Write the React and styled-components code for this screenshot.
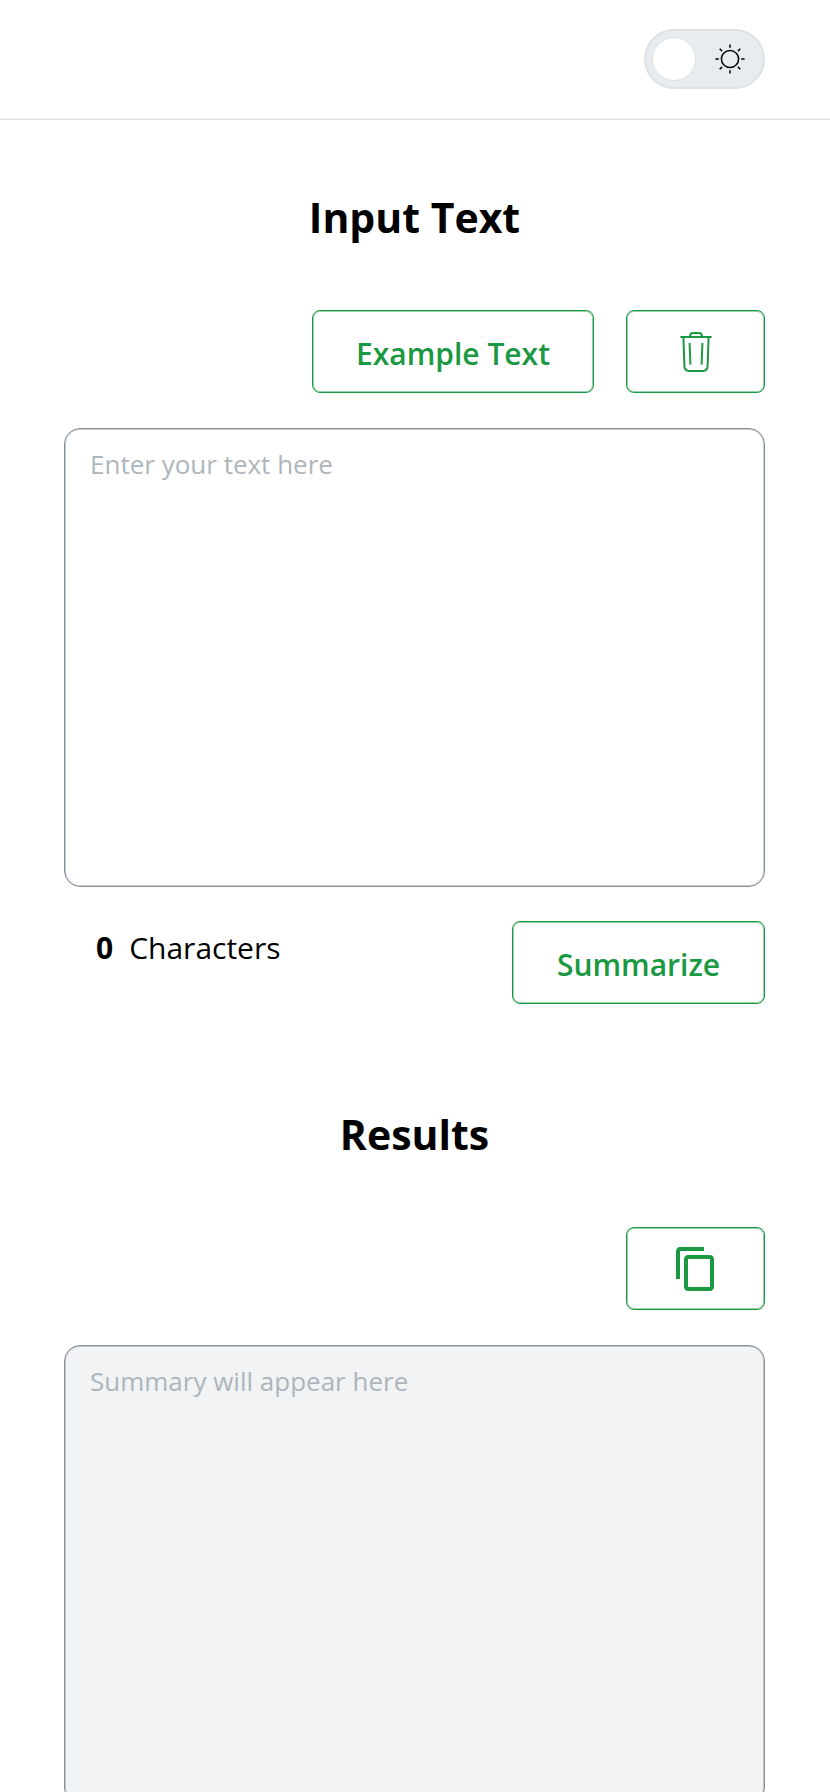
import React, { useState } from "react";
import styled, { createGlobalStyle } from "styled-components";
import { MdContentCopy } from "react-icons/md";

const GREEN = "#1a9842";
const EXAMPLE =
  "Text summarization is the process of shortening a document while keeping its most important ideas.";

const GlobalStyle = createGlobalStyle`
  *, *::before, *::after { box-sizing: border-box; }
  body {
    margin: 0;
    background: #fff;
    color: #000;
    font-family: "Segoe UI", "Open Sans", "Noto Sans", sans-serif;
  }
  button, textarea { font-family: inherit; }
`;

const Header = styled.header`
  display: flex;
  justify-content: flex-end;
  align-items: center;
  height: 120px;
  padding: 0 65px 1px 64px;
  border-bottom: 1px solid #dee2e6;
  box-shadow: inset 0 -1px rgba(222, 226, 230, 0.5);
`;

const Toggle = styled.label`
  position: relative;
  display: flex;
  flex-direction: ${(p) => (p.$dark ? "row-reverse" : "row")};
  align-items: center;
  justify-content: space-between;
  width: 121px;
  height: 60px;
  padding: 0 6px;
  border: 2px solid #dee2e6;
  border-radius: 30px;
  background: #e9ecef;
  cursor: pointer;
`;

const ToggleInput = styled.input`
  position: absolute;
  inset: 0;
  width: 100%;
  height: 100%;
  margin: 0;
  opacity: 0;
  cursor: pointer;
`;

const Knob = styled.span`
  width: 44px;
  height: 44px;
  border: 1px solid #dee2e6;
  border-radius: 50%;
  background: #fff;
`;

const SunSlot = styled.span`
  display: flex;
  padding: 0 11px;
`;

const Main = styled.main`
  padding: 0 65px 0 64px;
`;

const Panel = styled.section`
  display: flex;
  flex-direction: column;
  padding-top: 64px;
`;

const Title = styled.h2`
  margin: 0;
  font-size: 41px;
  line-height: 66px;
  font-weight: 700;
  text-align: center;
`;

const Actions = styled.div`
  display: flex;
  justify-content: flex-end;
  gap: 32px;
  padding: 60px 0 35px;
`;

const Button = styled.button`
  display: flex;
  align-items: center;
  justify-content: center;
  width: ${(p) => p.$width};
  height: 83px;
  padding: 4px 0 0;
  border: 1px solid ${GREEN};
  border-radius: 8px;
  box-shadow: inset 0 0 0 1px rgba(26, 152, 66, 0.45);
  background: transparent;
  color: ${GREEN};
  font-size: 30px;
  line-height: 40px;
  font-weight: 600;
  cursor: pointer;
`;

const IconButton = styled(Button)`
  padding: 0;
`;

const TextBox = styled.textarea`
  display: block;
  width: 100%;
  height: 459px;
  padding: 15px 25px;
  border: 1px solid #868e96;
  border-radius: 16px;
  box-shadow: inset 0 0 0 1px rgba(134, 142, 150, 0.45);
  outline: none;
  resize: none;
  background: ${(p) => (p.readOnly ? "#f1f3f5" : "#fff")};
  color: #000;
  font-size: 26px;
  line-height: 40px;

  &::placeholder {
    color: #adb5bd;
    opacity: 1;
  }
`;

const Footer = styled.div`
  display: flex;
  justify-content: space-between;
  align-items: flex-start;
  padding: 34px 0 33px;
`;

const Counter = styled.p`
  display: flex;
  gap: 16px;
  margin: 0;
  padding: 7px 32px;
  font-size: 30px;
  line-height: 40px;
`;

function SunIcon() {
  return (
    <svg width="32" height="32" viewBox="0 0 32 32" fill="none" stroke="#000" strokeWidth="1.5" aria-hidden="true">
      <circle cx="16" cy="16" r="8.6" />
      <path d="M16 1.4v3.4M16 27.2v3.4M1.4 16h3.4M27.2 16h3.4M5.7 5.7l2.4 2.4M23.9 23.9l2.4 2.4M5.7 26.3l2.4-2.4M23.9 8.1l2.4-2.4" />
    </svg>
  );
}

function TrashIcon() {
  return (
    <svg width="32" height="42" viewBox="0 1 32 42" fill="none" stroke="currentColor" strokeWidth="2" strokeLinejoin="round" aria-hidden="true">
      <path d="M.4 7h31.2" />
      <path d="M10.1 7V5.6Q10.4 3 13 3h6q2.6 0 2.9 2.6V7" />
      <path d="M3.4 7l1 29Q4.7 40.9 9 40.9h14q4.3 0 4.6-4.9L28.6 7" />
      <path d="M9.6 13l.8 21.6M22.4 13l-.8 21.6" />
    </svg>
  );
}

export default function App() {
  const [dark, setDark] = useState(false);
  const [text, setText] = useState("");
  const [summary, setSummary] = useState("");

  return (
    <>
      <GlobalStyle />
      <Header>
        <Toggle $dark={dark}>
          <ToggleInput
            type="checkbox"
            role="switch"
            aria-label="Dark mode"
            checked={dark}
            onChange={(e) => setDark(e.target.checked)}
          />
          <Knob />
          <SunSlot>
            <SunIcon />
          </SunSlot>
        </Toggle>
      </Header>
      <Main>
        <Panel>
          <Title id="input-title">Input Text</Title>
          <Actions>
            <Button type="button" $width="282px" onClick={() => setText(EXAMPLE)}>
              Example Text
            </Button>
            <IconButton type="button" $width="139px" aria-label="Clear text" onClick={() => setText("")}>
              <TrashIcon />
            </IconButton>
          </Actions>
          <TextBox
            aria-labelledby="input-title"
            placeholder="Enter your text here"
            value={text}
            onChange={(e) => setText(e.target.value)}
          />
          <Footer>
            <Counter>
              <strong>{text.length}</strong>
              <span>Characters</span>
            </Counter>
            <Button type="button" $width="253px" onClick={() => setSummary(text.split(". ")[0])}>
              Summarize
            </Button>
          </Footer>
        </Panel>
        <Panel>
          <Title id="results-title">Results</Title>
          <Actions>
            <IconButton
              type="button"
              $width="139px"
              aria-label="Copy summary"
              onClick={() => navigator.clipboard?.writeText(summary)}
            >
              <MdContentCopy size={48} />
            </IconButton>
          </Actions>
          <TextBox aria-labelledby="results-title" placeholder="Summary will appear here" value={summary} readOnly />
        </Panel>
      </Main>
    </>
  );
}
